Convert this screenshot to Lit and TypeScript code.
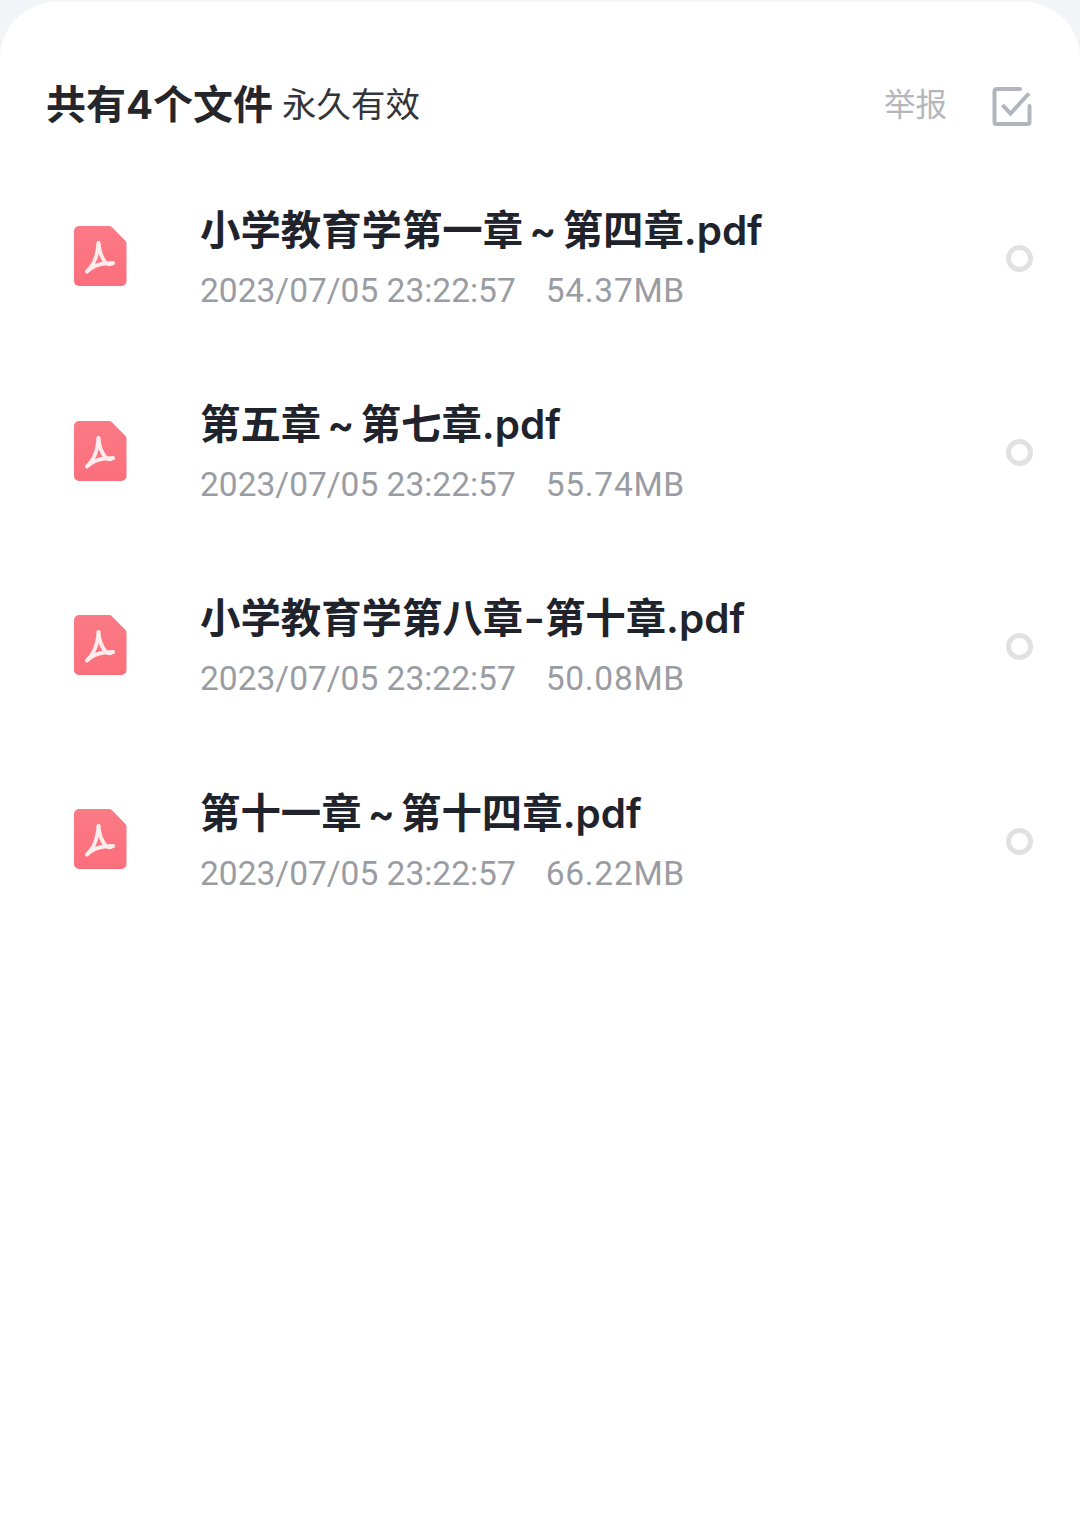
import { LitElement, html, css, svg } from "lit";
import { customElement } from "lit/decorators.js";

const files = [
  { name: "小学教育学第一章 ~ 第四章.pdf", time: "2023/07/05 23:22:57", size: "54.37MB" },
  { name: "第五章 ~ 第七章.pdf", time: "2023/07/05 23:22:57", size: "55.74MB" },
  { name: "小学教育学第八章-第十章.pdf", time: "2023/07/05 23:22:57", size: "50.08MB" },
  { name: "第十一章 ~ 第十四章.pdf", time: "2023/07/05 23:22:57", size: "66.22MB" },
];

const pdfIcon = svg`
  <defs>
    <linearGradient id="sheet" x1="0" y1="0" x2="0" y2="1">
      <stop offset="0" stop-color="#fa7a85"/>
      <stop offset="1" stop-color="#fc6f7c"/>
    </linearGradient>
  </defs>
  <path d="M5 0H35a4 4 0 0 1 3 1.300L51 14.500a4 4 0 0 1 1.500 3V55a5 5 0 0 1-5 5H5a5 5 0 0 1-5-5V5a5 5 0 0 1 5-5Z" fill="url(#sheet)"/>
  <g fill="none" stroke="#ffecec" stroke-width="3.800" stroke-linecap="round" stroke-linejoin="round">
    <path d="M24.500 17C24 24 22.500 31 19.500 37C17.500 40.500 15 43.500 13 45.500"/>
    <path d="M24.500 17C25 24 27 31 31.500 36.500C33.500 38.500 36.500 38.800 39 37"/>
    <path d="M13 45.500C17 41.500 23 38.500 30 37.500L39 37"/>
  </g>
`;

@customElement("app-root")
export class AppRoot extends LitElement {
  static styles = css`
    :host {
      display: block;
      width: 1080px;
      height: 1528px;
      background: #f3f4f7;
      font-family: Inter, "Noto Sans CJK SC", sans-serif;
      overflow: hidden;
    }
    .sheet {
      height: 1528px;
      box-sizing: border-box;
      background: #fff;
      border-radius: 56px 56px 0 0;
      margin-top: 2px;
      padding: 78px 48px 0 46px;
    }
    .head {
      display: flex;
      align-items: center;
      height: 50px;
    }
    .title {
      font-size: 40px;
      font-weight: 700;
      color: #24262b;
      line-height: 50px;
    }
    .note {
      font-size: 34.500px;
      color: #33353a;
      margin-left: 9px;
      line-height: 50px;
    }
    .report {
      margin-left: auto;
      font-size: 31.500px;
      color: #b4b6bc;
      line-height: 50px;
    }
    .check {
      width: 40px;
      height: 40px;
      margin-left: 45px;
      flex: none;
      margin-top: 2px;
    }
    .rows {
      display: flex;
      flex-direction: column;
      margin-top: 31px;
    }
    .row {
      display: flex;
      align-items: center;
      height: 194.400px;
    }
    .icon {
      width: 53px;
      height: 61px;
      margin-left: 28px;
      margin-bottom: 3px;
      flex: none;
    }
    .info {
      margin-left: 73px;
      flex: 1;
    }
    .name {
      font-size: 40.400px;
      font-weight: 600;
      color: #20232b;
      line-height: 50px;
      white-space: nowrap;
      word-spacing: -4px;
    }
    .dash {
      display: inline-block;
      margin: 0 1.500px;
      transform: scaleX(1.15);
    }
    .meta {
      display: flex;
      gap: 30px;
      font-family: Roboto, "Noto Sans CJK SC", sans-serif;
      font-size: 33.500px;
      color: #9a9ca3;
      line-height: 40px;
      margin-top: 15px;
    }
    .size {
      letter-spacing: 0.7px;
    }
    .radio {
      width: 27px;
      height: 27px;
      box-sizing: border-box;
      border: 5px solid #e1e1e3;
      border-radius: 50%;
      flex: none;
      margin-right: -1px;
    }
  `;

  private renderName(name: string) {
    const [first, ...rest] = name.split("-");
    return rest.length
      ? html`${first}<span class="dash">-</span>${rest.join("-")}`
      : name;
  }

  render() {
    return html`
      <div class="sheet">
        <div class="head">
          <span class="title">共有4个文件</span>
          <span class="note">永久有效</span>
          <span class="report">举报</span>
          <svg class="check" viewBox="0 0 40 40" fill="none" stroke="#b3b5bd" stroke-width="4">
            <path d="M28 3H4.500a2 2 0 0 0-2 2V36a2 2 0 0 0 2 2H35.500a2 2 0 0 0 2-2V20" stroke-linecap="round"/>
            <path d="M10.500 19l8 8.500L37 7.500"/>
          </svg>
        </div>
        <div class="rows">
          ${files.map(
            (f) => html`
              <div class="row">
                <svg class="icon" viewBox="0 0 53 61">${pdfIcon}</svg>
                <div class="info">
                  <div class="name">${this.renderName(f.name)}</div>
                  <div class="meta"><span>${f.time}</span><span class="size">${f.size}</span></div>
                </div>
                <div class="radio"></div>
              </div>
            `
          )}
        </div>
      </div>
    `;
  }
}
